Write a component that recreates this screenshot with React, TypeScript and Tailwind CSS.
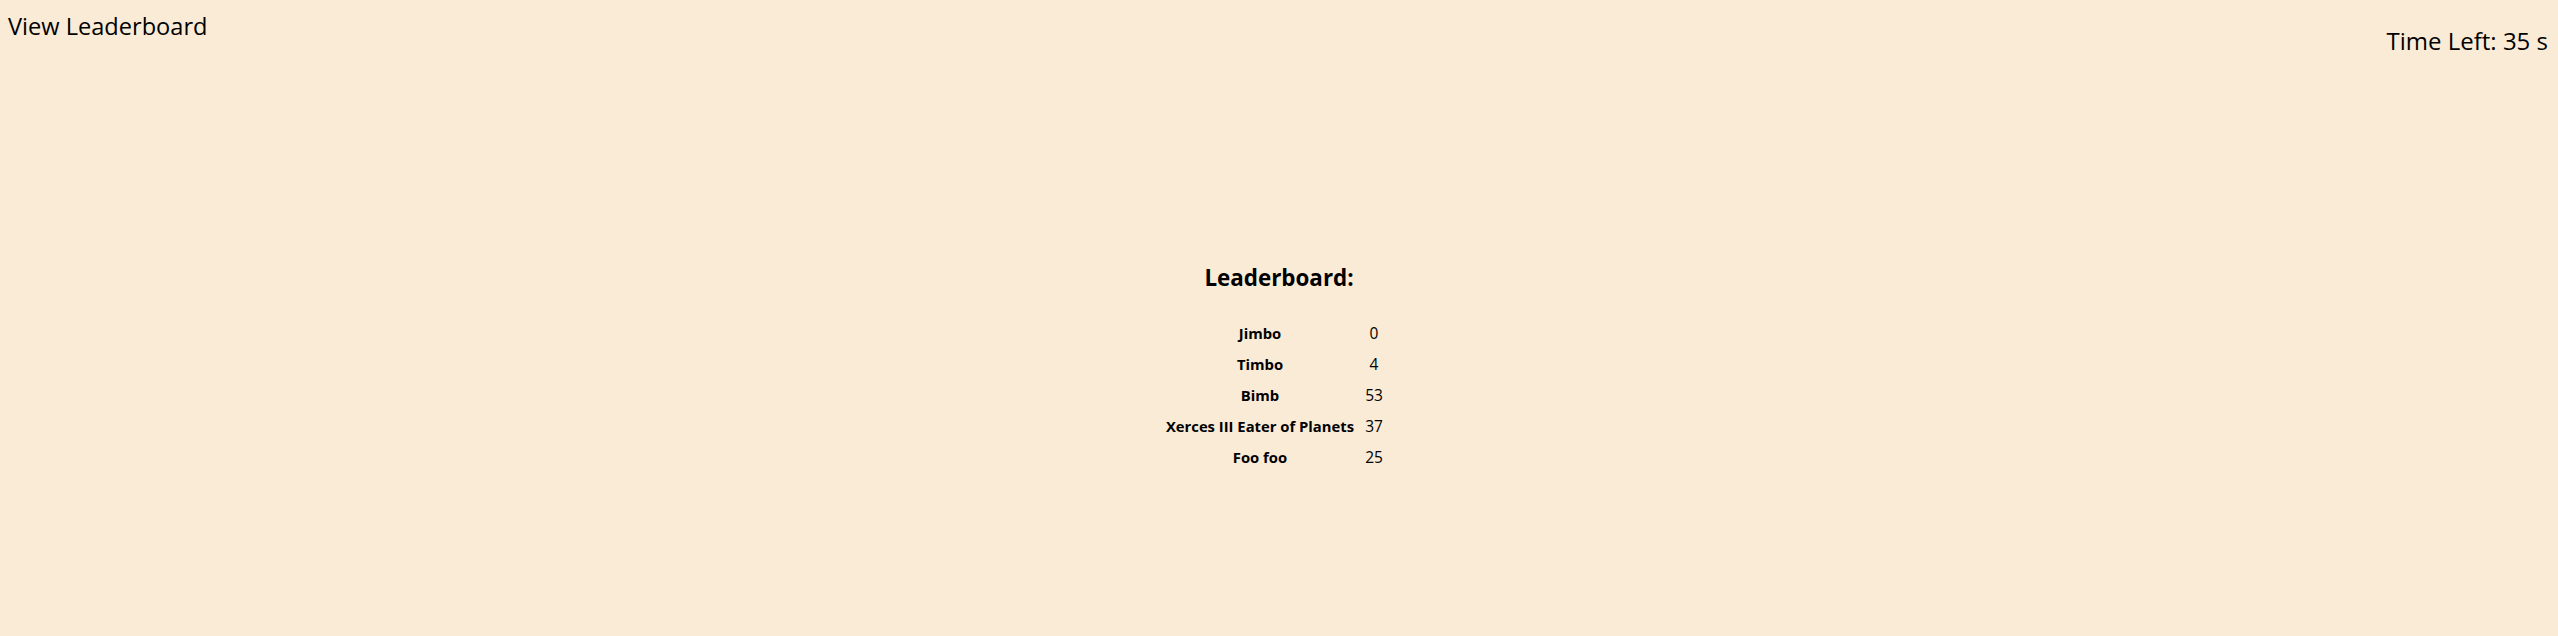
const scores: { name: string; score: number }[] = [
    { name: "Jimbo", score: 0 },
    { name: "Timbo", score: 4 },
    { name: "Bimb", score: 53 },
    { name: "Xerces III Eater of Planets", score: 37 },
    { name: "Foo foo", score: 25 },
];

export default function App() {
    return (
        <main className="h-[636px] w-full bg-[#faebd7] text-black font-['Open_Sans',sans-serif]">
            <div className="flex items-start justify-between">
                <button className="pt-[10px] pl-2 text-[23.6px] leading-[32px]">
                    View Leaderboard
                </button>
                <p className="pt-[25px] pr-[10px] text-[24px] leading-[32px]">
                    Time Left: 35 s
                </p>
            </div>
            <div className="flex flex-col items-center mt-[205px]">
                <h2 className="text-[22.4px] leading-[32px] font-bold">
                    Leaderboard:
                </h2>
                <table className="mt-[24px] mr-[10px] border-separate border-spacing-0 text-[16px] leading-[21px]">
                    <tbody>
                        {scores.map((s) => (
                            <tr key={s.name}>
                                <td className="w-[200px] px-[5px] py-[5px] text-center text-[14.8px] font-bold whitespace-nowrap">
                                    {s.name}
                                </td>
                                <td className="w-[28px] px-[5px] py-[5px] text-center text-[15.5px]">
                                    {s.score}
                                </td>
                            </tr>
                        ))}
                    </tbody>
                </table>
            </div>
        </main>
    );
}
